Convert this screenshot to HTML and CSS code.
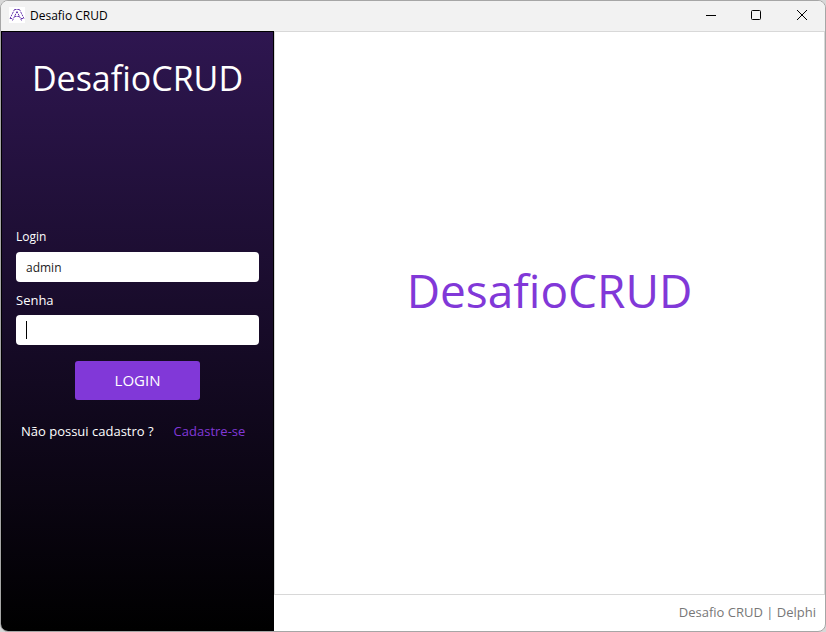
FILE: index.html
```html
<!DOCTYPE html>
<html lang="pt-BR">
<head>
<meta charset="utf-8">
<meta name="viewport" content="width=device-width, initial-scale=1">
<title>Desafio CRUD</title>
<link rel="stylesheet" href="styles.css">
</head>
<body>
<div class="window">
  <header class="titlebar">
    <svg class="app-icon" viewBox="0 0 16 16" aria-hidden="true">
      <rect width="16" height="16" fill="#fff"/>
      <g fill="none" stroke="#6a3cb0" stroke-dasharray="2 .8">
        <path d="M5.500 2.500h5M5.500 2.500L1 11.500M10.500 2.500L15 11.500M8 4.500L3.500 13.500M8 4.500l4.500 9M1 11.500h3M12 11.500h3M5.500 9.500h5"/>
      </g>
    </svg>
    <span class="caption">Desafio CRUD</span>
    <div class="controls">
      <button type="button" class="control" aria-label="Minimizar"><svg viewBox="0 0 12 12"><path d="M2 6.500h10"/></svg></button>
      <button type="button" class="control" aria-label="Maximizar"><svg viewBox="0 0 12 12"><rect x="1.500" y="1.500" width="9" height="9" rx="1"/></svg></button>
      <button type="button" class="control" aria-label="Fechar"><svg viewBox="0 0 12 12"><path d="M1 1l10 10M11 1L1 11"/></svg></button>
    </div>
  </header>
  <div class="content">
    <aside class="sidebar">
      <h1 class="brand">DesafioCRUD</h1>
      <form class="login">
        <label class="label label-small" for="login">Login</label>
        <input class="field" id="login" type="text" value="admin">
        <label class="label" for="senha">Senha</label>
        <div class="field-wrap">
          <input class="field" id="senha" type="password">
          <span class="caret"></span>
        </div>
        <button class="submit" type="button">LOGIN</button>
        <p class="signup"><span>Não possui cadastro ?</span><a class="link" href="#">Cadastre-se</a></p>
      </form>
    </aside>
    <div class="workspace">
      <main class="hero"><p class="logo">DesafioCRUD</p></main>
      <footer class="footer">Desafio CRUD | Delphi</footer>
    </div>
  </div>
</div>
</body>
</html>
```
FILE: styles.css
```css
* { box-sizing: border-box; }

body {
  margin: 0;
  background: #d8d8d8;
  font-family: "Open Sans", "Noto Sans", sans-serif;
  font-size: 13px;
  font-variant-ligatures: none;
}

h1, p { margin: 0; font-weight: 400; }

.window {
  display: flex;
  flex-direction: column;
  min-height: 100vh;
  border: 1px solid #a6a6a6;
  border-radius: 8px;
  background: #fff;
  overflow: hidden;
}

.titlebar {
  display: flex;
  align-items: center;
  height: 30px;
  padding-left: 8px;
  padding-bottom: 2px;
  background: #f2f2f2;
}

.app-icon { width: 16px; height: 16px; }

.caption {
  flex: 1;
  margin-left: 5px;
  font-size: 12px;
  color: #000;
}

.controls { display: flex; }

.control {
  display: flex;
  align-items: center;
  justify-content: center;
  width: 46px;
  height: 28px;
  padding: 0;
  border: 0;
  background: none;
}

.control svg {
  width: 12px;
  height: 12px;
  fill: none;
  stroke: #000;
  overflow: visible;
}

.content { display: flex; flex: 1; }

.sidebar {
  flex: 0 0 273px;
  padding: 16px 14px;
  border: 1px solid #000;
  background: linear-gradient(#2e1650, #000);
  color: #fff;
}

.brand {
  font-size: 34px;
  line-height: 60px;
  text-align: center;
}

.login {
  display: flex;
  flex-direction: column;
  margin-top: 120px;
}

.label {
  font-size: 13px;
  line-height: 18px;
  margin-bottom: 6px;
}

.label-small { font-size: 12px; }

.field {
  width: 100%;
  height: 30px;
  margin-bottom: 9px;
  padding: 0 10px;
  border: 0;
  border-radius: 4px;
  background: #fff;
  color: #222;
  font: inherit;
  font-size: 12px;
  outline: 0;
}

.field-wrap { position: relative; }

.caret {
  position: absolute;
  left: 10px;
  top: 6px;
  width: 1px;
  height: 18px;
  background: #000;
}

.submit {
  align-self: center;
  width: 125px;
  height: 39px;
  margin-top: 7px;
  padding: 0 0 2px;
  border: 0;
  border-radius: 3px;
  background: #8138d8;
  color: #fff;
  font: inherit;
  font-size: 15px;
}

.signup {
  display: flex;
  gap: 20px;
  margin-top: 20px;
  padding-left: 5px;
  line-height: 22px;
  white-space: nowrap;
}

.link { color: #8138d8; text-decoration: none; }

.workspace {
  display: flex;
  flex: 1;
  flex-direction: column;
}

.hero {
  display: flex;
  flex: 1;
  align-items: center;
  justify-content: center;
  padding-bottom: 46px;
  border: 1px solid #d8d8d8;
}

.logo {
  color: #8138d8;
  font-size: 46px;
  line-height: 64px;
}

.footer {
  padding: 0 9px 2px;
  color: #777;
  line-height: 34px;
  text-align: right;
}
```
